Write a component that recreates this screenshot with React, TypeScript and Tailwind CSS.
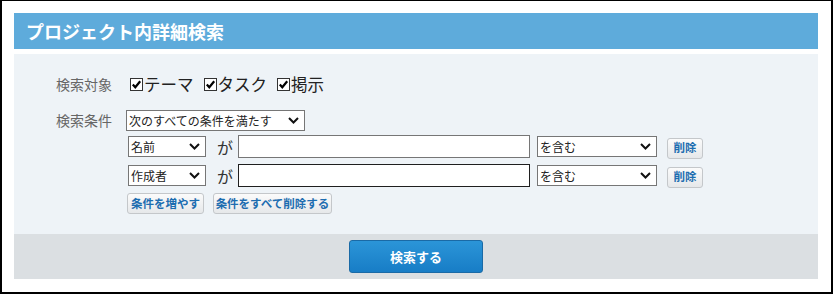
import React from "react";

const jp = "font-['Meiryo','Noto_Sans_CJK_JP',sans-serif]";

function CheckItem({ label }: { label: string }) {
    return (
        <label className="flex items-center mr-[10px]">
            <svg width="13" height="13" viewBox="0 0 13 13" className="mr-[1px]">
                <rect x="0.5" y="0.5" width="12" height="12" fill="#fff" stroke="#333" />
                <path d="M2.8 6.4 L5.3 9.2 L10.2 3.2" fill="none" stroke="#000" strokeWidth="2.2" />
            </svg>
            <span className="text-[16.5px] leading-none text-[#222]">{label}</span>
        </label>
    );
}

function FakeSelect({ value, className }: { value: string; className: string }) {
    return (
        <div
            className={`flex items-center justify-between bg-white border border-[#767676] pl-[2px] pr-[5px] text-[12px] leading-none text-[#222] ${className}`}
        >
            <span>{value}</span>
            <svg width="11" height="7" viewBox="0 0 11 7">
                <path d="M1 1 L5.5 5.5 L10 1" fill="none" stroke="#111" strokeWidth="2" />
            </svg>
        </div>
    );
}

function SmallButton({ text, className }: { text: string; className: string }) {
    return (
        <button
            type="button"
            className={`flex items-center justify-center h-[21px] px-0 whitespace-nowrap rounded-[3px] border border-[#c4c7ca] bg-gradient-to-b from-[#fbfbfb] to-[#e6e8ea] text-[11.5px] font-bold leading-none text-[#1d6db0] ${className}`}
        >
            {text}
        </button>
    );
}

function ConditionRow({ field, focused }: { field: string; focused?: boolean }) {
    return (
        <div className="flex items-center h-[23px]">
            <FakeSelect value={field} className="ml-[2px] w-[78px] h-[21px]" />
            <span className="ml-[11px] w-[21px] text-[16px] leading-none text-[#333]">が</span>
            <div
                className={`w-[292px] h-[23px] bg-white border ${focused ? "border-[#1f1f1f]" : "border-[#767676]"}`}
            />
            <FakeSelect value="を含む" className="ml-[7px] w-[120px] h-[21px]" />
            <SmallButton text="削除" className="ml-[10px] w-[36px] mt-[3px]" />
        </div>
    );
}

export default function App() {
    return (
        <div
            className={`w-[833px] h-[294px] bg-white border-black border-t border-l-2 border-r-2 border-b-2 pt-[12px] pl-[12px] pr-[13px] ${jp}`}
        >
            <div className="h-[36px] bg-[#5eabdb] flex items-center pl-[12px]">
                <h1 className="text-[18px] font-bold text-white leading-none">プロジェクト内詳細検索</h1>
            </div>

            <div className="mt-[5px] bg-[#eef3f7] pt-[20px] pb-[20px] pl-[42px]">
                <div className="flex items-center h-[20px]">
                    <span className="w-[74px] text-[14px] text-[#666] leading-none">検索対象</span>
                    <CheckItem label="テーマ" />
                    <CheckItem label="タスク" />
                    <CheckItem label="掲示" />
                </div>

                <div className="mt-[16px] flex">
                    <span className="w-[70px] pt-[3px] text-[14px] text-[#666] leading-none">検索条件</span>
                    <div className="flex flex-col">
                        <FakeSelect value="次のすべての条件を満たす" className="w-[179px] h-[21px]" />
                        <div className="mt-[4px] flex flex-col gap-[6px]">
                            <ConditionRow field="名前" />
                            <ConditionRow field="作成者" focused />
                        </div>
                        <div className="mt-[6px] flex gap-[9px] ml-[1px]">
                            <SmallButton text="条件を増やす" className="w-[77px]" />
                            <SmallButton text="条件をすべて削除する" className="w-[119px]" />
                        </div>
                    </div>
                </div>
            </div>

            <div className="h-[45px] bg-[#dbdfe2] flex items-center justify-center">
                <button
                    type="button"
                    className="w-[134px] h-[33px] rounded-[3px] border border-[#1a6aa6] bg-gradient-to-b from-[#2b95d8] to-[#177dc6] text-white text-[13px] font-bold"
                >
                    検索する
                </button>
            </div>
        </div>
    );
}
